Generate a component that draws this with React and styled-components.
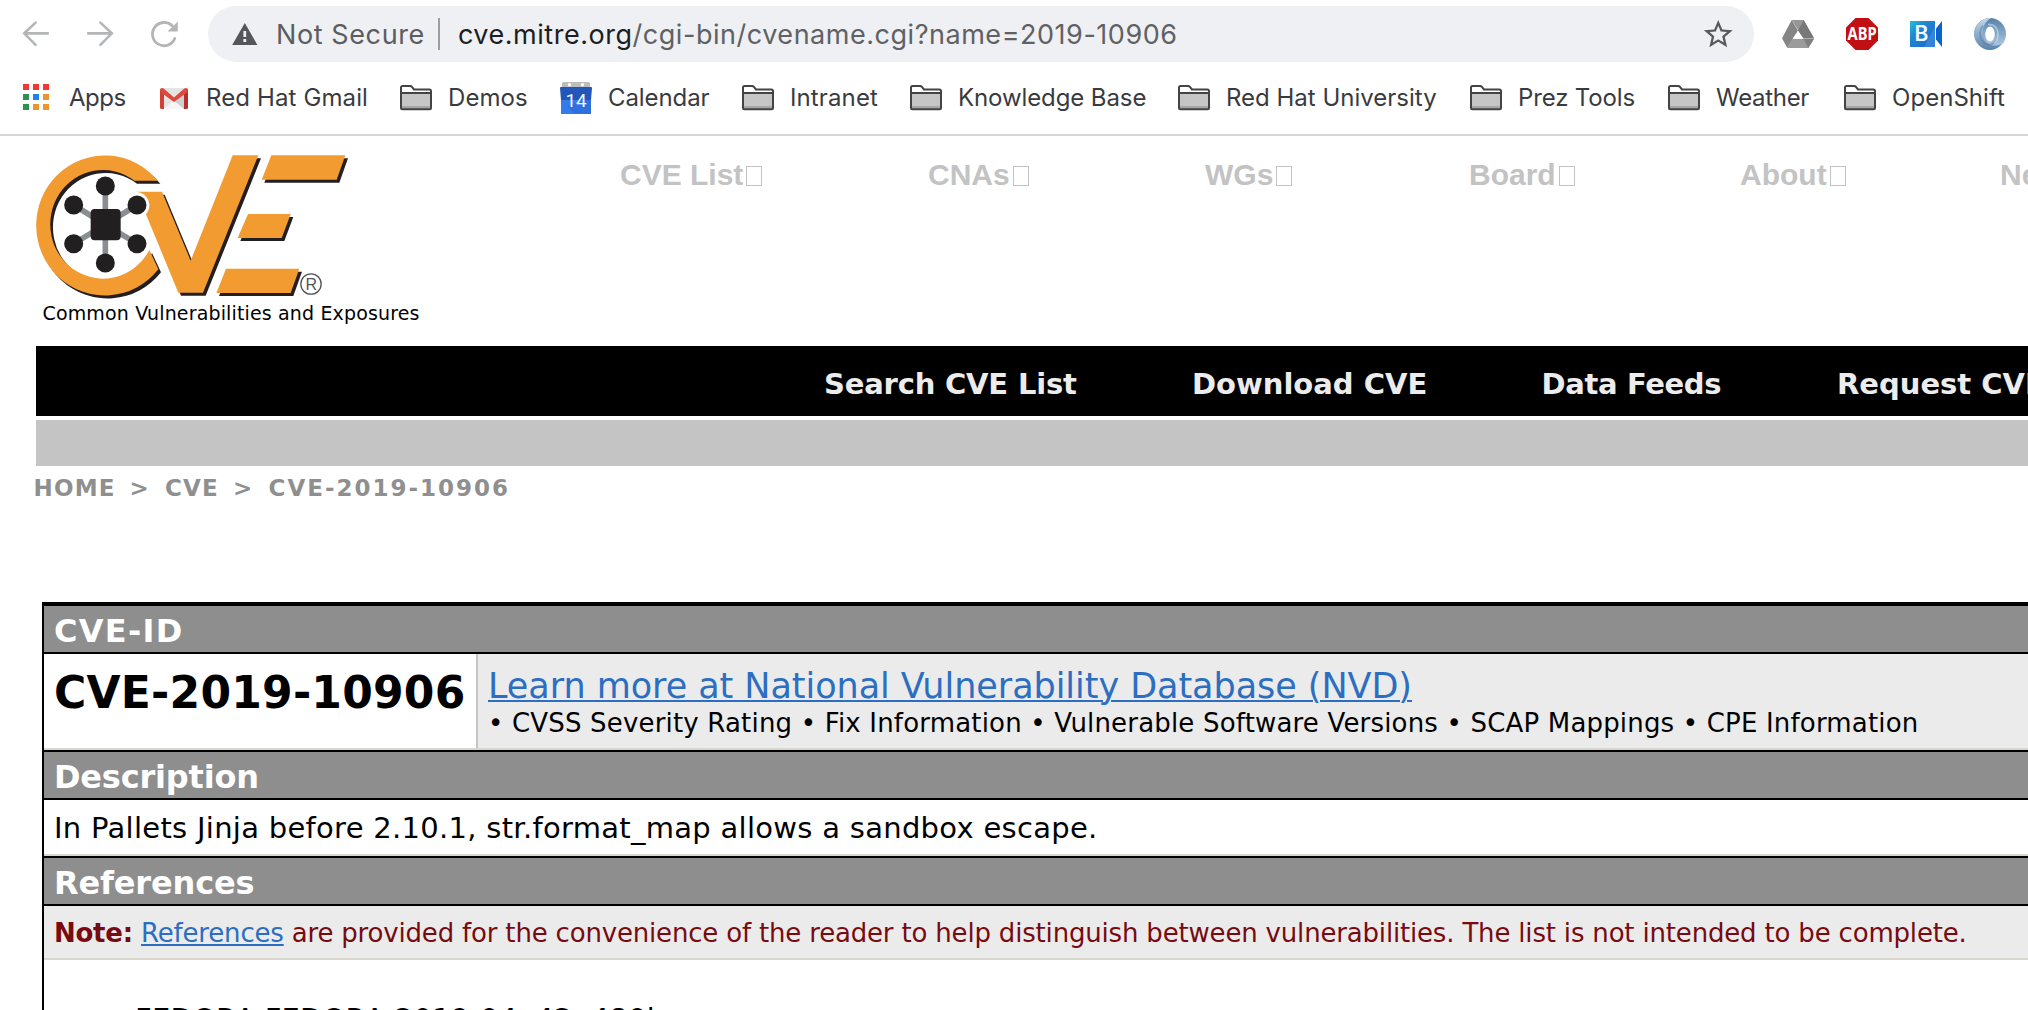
import React from "react";
import styled, { createGlobalStyle } from "styled-components";

const VERDANA = `"DejaVu Sans", Verdana, sans-serif`;
const SYSTEM = `Inter, Roboto, sans-serif`;
const ARIAL = `"Liberation Sans", Arial, sans-serif`;

const GlobalStyle = createGlobalStyle`
  *, *::before, *::after { box-sizing: border-box; }
  html, body { margin: 0; padding: 0; background: #fff; overflow: hidden; }
`;

const Window = styled.div`
  width: 2028px;
  height: 1010px;
  overflow: hidden;
  background: #fff;
  display: flex;
  flex-direction: column;
`;

/* ---------- browser chrome ---------- */

const Chrome = styled.header`
  flex: none;
  height: 136px;
  border-bottom: 2px solid #d5d6da;
  font-family: ${SYSTEM};
`;

const Toolbar = styled.div`
  display: flex;
  align-items: center;
  height: 68px;
  padding-left: 20px;
`;

const NavButtons = styled.div`
  display: flex;
  gap: 32px;
`;

const Icon = styled.svg`
  display: block;
  flex: none;
  width: ${(p) => p.$size || 32}px;
  height: ${(p) => p.$size || 32}px;
  overflow: visible;
`;

const Omnibox = styled.div`
  display: flex;
  align-items: center;
  width: 1546px;
  height: 56px;
  margin-left: 28px;
  padding: 0 18.5px 0 24px;
  border-radius: 28px;
  background: #eff0f3;
  font-size: 27px;
  line-height: 32px;
  white-space: pre;
`;

const Security = styled.span`
  margin-left: 18px;
  padding-top: 1px;
  letter-spacing: 0.6px;
  color: #5c5d60;
`;

const Divider = styled.span`
  width: 2px;
  height: 32px;
  margin: 0 18px 0 13px;
  background: #9c9ea2;
`;

const Url = styled.span`
  flex: 1;
  padding-top: 1px;
  letter-spacing: 0.53px;
  color: #5f6164;
  b {
    font-weight: 400;
    color: #1d1e21;
  }
`;

const Extensions = styled.div`
  display: flex;
  gap: 32px;
  margin-left: 28px;
`;

const Bookmarks = styled.div`
  display: flex;
  align-items: center;
  height: 66px;
  padding: 0 0 8px 21px;
`;

const Bookmark = styled.div`
  display: flex;
  flex: none;
  align-items: center;
  gap: 16px;
  width: ${(p) => p.$w}px;
  font-size: 24px;
  line-height: 30px;
  letter-spacing: ${(p) => p.$ls || 0}px;
  color: #393b3f;
  white-space: nowrap;
`;

const BookmarkLabel = styled.span`
  padding-top: 2px;
`;

const BackIcon = () => (
  <Icon viewBox="0 0 32 32" fill="none" stroke="#b4b5b6" strokeWidth="2.6" strokeLinecap="round">
    <path d="M27.8 15.4H4.5M15.6 4.6L4.2 15.4l11.4 11.4" />
  </Icon>
);

const ForwardIcon = () => (
  <Icon viewBox="0 0 32 32" fill="none" stroke="#b4b5b6" strokeWidth="2.6" strokeLinecap="round">
    <path d="M4.2 15.4h23.6M16.4 4.6l11.4 10.8-11.4 11.4" />
  </Icon>
);

const ReloadIcon = () => (
  <Icon viewBox="0 0 32 32">
    <path d="M26.8 20.5A11.6 11.6 0 1 1 24.2 7.8" fill="none" stroke="#b4b5b6" strokeWidth="2.8" strokeLinecap="round" />
    <path d="M29.8 3.4v10H19.6z" fill="#b4b5b6" />
  </Icon>
);

const WarningIcon = () => (
  <Icon $size={26} viewBox="0 0 26 26">
    <path d="M12.8 2L25.4 24H.2z" fill="#545659" />
    <path d="M11.4 10h2.8v6h-2.8zM11.4 18h2.8v3h-2.8z" fill="#eff0f3" />
  </Icon>
);

const StarIcon = () => (
  <Icon $size={34.5} viewBox="0 0 24 24">
    <path
      fill="#58595c"
      d="M22 9.24l-7.19-.62L12 2 9.19 8.63 2 9.24l5.46 4.73L5.82 21 12 17.27 18.18 21l-1.63-7.03L22 9.24zM12 15.4l-3.76 2.27 1-4.28-3.32-2.88 4.38-.38L12 6.1l1.71 4.04 4.38.38-3.32 2.88 1 4.28L12 15.4z"
    />
  </Icon>
);

const DriveIcon = () => (
  <Icon viewBox="0 0 32 32">
    <path d="M9.7 2L16 12.7 5.3 30 0 20.3z" fill="#858585" />
    <path d="M9.7 2h12L32 20.3H21.3z" fill="#979797" />
    <path d="M21.7 2L32 20.3H21.3L16 12.7z" fill="#787878" />
    <path d="M10.7 20.7H32L26.3 30h-21z" fill="#9b9b9b" />
    <path d="M21.3 20.7H32L26.3 30z" fill="#7f7f7f" />
    <path d="M16 12.7l5.3 8H10.7z" fill="#fff" />
  </Icon>
);

const AdblockIcon = () => (
  <Icon viewBox="0 0 32 32">
    <path d="M9.5 0h13L32 9.5v13L22.5 32h-13L0 22.5v-13z" fill="#c10f14" />
    <text x="1.6" y="22.4" textLength="29" lengthAdjust="spacingAndGlyphs" fontFamily="Noto Sans, sans-serif" fontWeight="700" fontSize="17" fill="#fff">
      ABP
    </text>
  </Icon>
);

const BlueJeansIcon = () => (
  <Icon viewBox="0 0 32 32">
    <defs>
      <linearGradient id="bj" x1="0" y1="0" x2="1" y2="1">
        <stop offset="0" stopColor="#25bfd8" />
        <stop offset=".35" stopColor="#2086d4" />
        <stop offset="1" stopColor="#1767c8" />
      </linearGradient>
    </defs>
    <path d="M0 3h25v26H0z" fill="url(#bj)" />
    <path d="M25 8.5V29H14z" fill="#3f8fe0" opacity=".7" />
    <path d="M32 3v26l-6-7.5v-11z" fill="#0b63cb" />
    <text x="4.6" y="23.3" fontFamily="Inter, sans-serif" fontWeight="600" fontSize="21" fill="#f2f8fd">
      B
    </text>
  </Icon>
);

const SwirlIcon = () => (
  <Icon viewBox="0 0 32 32">
    <defs>
      <linearGradient id="swA" x1="0" y1="0" x2="0" y2="1">
        <stop offset="0" stopColor="#5580a8" />
        <stop offset="1" stopColor="#b9d3ea" />
      </linearGradient>
      <linearGradient id="swB" x1="0" y1="0" x2="0" y2="1">
        <stop offset="0" stopColor="#c3d8ea" />
        <stop offset="1" stopColor="#5a84ab" />
      </linearGradient>
    </defs>
    <circle cx="16" cy="16" r="16" fill="url(#swA)" />
    <path d="M17 0A16 16 0 0 0 16 32c5 0 9-2.500 11-6-7 3.500-15 1-17.500-6C7 12 10 4 17 0z" fill="url(#swB)" />
    <path d="M9 7.500C4.500 13 5.500 22 11 25.500c4 2.400 9 1 11.500-3" fill="none" stroke="#557fa9" strokeWidth="1.800" opacity=".55" />
    <path d="M14 6.500c6-1 10 4 10 10 0 4-1.500 7-4 9" fill="none" stroke="#d2e2f0" strokeWidth="1.600" opacity=".6" />
    <ellipse cx="16" cy="16" rx="4.800" ry="7.600" fill="#fff" />
  </Icon>
);

const APP_COLORS = ["#f23535", "#f23535", "#f23535", "#2f9150", "#1b83ea", "#ea962c", "#2f9150", "#ea962c", "#ea962c"];

const AppsIcon = () => (
  <Icon viewBox="0 0 32 32">
    {APP_COLORS.map((c, i) => (
      <rect key={i} x={2 + (i % 3) * 10} y={3 + Math.floor(i / 3) * 10} width="6" height="6" fill={c} />
    ))}
  </Icon>
);

const GmailIcon = () => (
  <Icon viewBox="0 0 32 32">
    <rect x="2" y="7" width="28" height="21" rx="1.500" fill="#e4e4e4" />
    <path d="M6 28l10-9 10 9z" fill="#f5f5f5" />
    <path d="M16 19.500l10-9V28z" fill="#cfcfcf" />
    <path d="M2 8.500h4V28H3.500A1.500 1.500 0 0 1 2 26.500z" fill="#d23f35" />
    <path d="M26 8.500h4v18a1.500 1.500 0 0 1-1.500 1.500H26z" fill="#b52f2c" />
    <path d="M2 9c0-2 2.300-2.700 3.700-1.500L16 16.500 26.300 7.500C27.700 6.300 30 7 30 9l-1 2.500-13 9.500L3 11.500z" fill="#dc4a3e" />
  </Icon>
);

const FolderIcon = () => (
  <Icon viewBox="0 0 32 32">
    <path d="M1 27V6.500A1.500 1.500 0 0 1 2.500 5h7.600c.8 0 1.300.3 1.800.9L14 8.500h15.500A1.500 1.500 0 0 1 31 10v17a1.300 1.300 0 0 1-1.300 1.300H2.300A1.300 1.300 0 0 1 1 27z" fill="#fff" />
    <path d="M1 12h30v15.500H1z" fill="#c6c6c6" />
    <path d="M1 25h30v3H1z" fill="#a6a6a6" />
    <path
      d="M1 27V6.500A1.500 1.500 0 0 1 2.500 5h7.600c.8 0 1.300.3 1.800.9L14 8.500h15.500A1.500 1.500 0 0 1 31 10v17a1.300 1.300 0 0 1-1.300 1.300H2.300A1.300 1.300 0 0 1 1 27zM1 12h30"
      fill="none"
      stroke="#434244"
      strokeWidth="2"
    />
  </Icon>
);

const CalendarIcon = () => (
  <Icon viewBox="0 0 32 32">
    <path d="M2 7V2.500Q2 1 3.500 1h25Q30 1 30 2.500V7z" fill="#bcbcbc" />
    <circle cx="9.500" cy="3.700" r="1.700" fill="#fff" />
    <circle cx="22.500" cy="3.700" r="1.700" fill="#fff" />
    <path d="M1 6h30q1 0 1 1l-1 12v13q0 1-1 1H2q-1 0-1-1V19L0 7q0-1 1-1z" fill="#2356ba" />
    <path d="M1 19h30v13q0 1-1 1H2q-1 0-1-1z" fill="#367bee" />
    <path d="M7 25l8 8h15q1 0 1-1V19h-6z" fill="#2c69d6" opacity=".6" />
    <text x="16" y="25.700" textAnchor="middle" fontFamily="Roboto, sans-serif" fontSize="19" letterSpacing="-.3" fill="#f1f5fd">
      14
    </text>
  </Icon>
);

const BOOKMARKS = [
  { label: "Apps", icon: AppsIcon, w: 137, ls: -0.5 },
  { label: "Red Hat Gmail", icon: GmailIcon, w: 242, ls: 0.12 },
  { label: "Demos", icon: FolderIcon, w: 160, ls: 0.07 },
  { label: "Calendar", icon: CalendarIcon, w: 182, ls: -0.08 },
  { label: "Intranet", icon: FolderIcon, w: 168, ls: 0.12 },
  { label: "Knowledge Base", icon: FolderIcon, w: 268, ls: -0.1 },
  { label: "Red Hat University", icon: FolderIcon, w: 292 },
  { label: "Prez Tools", icon: FolderIcon, w: 198, ls: -0.15 },
  { label: "Weather", icon: FolderIcon, w: 176, ls: -0.3 },
  { label: "OpenShift", icon: FolderIcon, w: 184, ls: 0.04 },
];

/* ---------- site header ---------- */

const Page = styled.main`
  flex: 1;
  min-height: 0;
  font-family: ${VERDANA};
`;

const SiteHeader = styled.div`
  display: flex;
  height: 210px;
  padding: 18px 0 0 36px;
`;

const Brand = styled.div`
  flex: none;
  width: 584px;
`;

const LogoSvg = styled.svg`
  display: block;
  width: 312px;
  height: 146px;
  overflow: visible;
`;

const Tagline = styled.div`
  margin: 1px 0 0 6.5px;
  font-size: 19px;
  line-height: 24px;
  letter-spacing: 0.15px;
  color: #000;
  white-space: nowrap;
`;

const TopNav = styled.nav`
  display: flex;
  flex: 1;
  min-width: 0;
  padding-top: 4px;
  overflow: hidden;
`;

const TopLink = styled.a`
  display: flex;
  flex: none;
  gap: 3px;
  width: ${(p) => p.$w}px;
  height: 34px;
  font: bold 30px/34px ${ARIAL};
  color: #c3c3c3;
`;

const MissingGlyph = styled.i`
  width: 16px;
  height: 20px;
  margin-top: 8px;
  border: 1px solid #c3c3c3;
`;

const TOP_LINKS = [
  { label: "CVE List", w: 308 },
  { label: "CNAs", w: 277 },
  { label: "WGs", w: 264 },
  { label: "Board", w: 271 },
  { label: "About", w: 260 },
  { label: "News", w: 200 },
];

const BlackBar = styled.nav`
  display: flex;
  height: 70px;
  margin-left: 36px;
  padding: 6px 0 0 788px;
  overflow: hidden;
  background: #000;
`;

const BarLink = styled.a`
  flex: none;
  width: ${(p) => p.$w}px;
  font-size: 29px;
  font-weight: bold;
  line-height: 64px;
  letter-spacing: ${(p) => p.$ls || 0}px;
  color: #ececec;
  white-space: nowrap;
`;

const GrayBar = styled.div`
  height: 46px;
  margin: 4px 0 0 36px;
  background: #c4c4c4;
`;

const Breadcrumb = styled.div`
  display: flex;
  height: 136px;
  padding: 7px 0 0 33.5px;
`;

const Crumb = styled.span`
  width: ${(p) => p.$w}px;
  font-size: 23px;
  font-weight: bold;
  line-height: 30px;
  letter-spacing: ${(p) => p.$ls || 0}px;
  color: #8f8f8f;
  white-space: nowrap;
`;

/* ---------- CVE record ---------- */

const Record = styled.section`
  height: 520px;
  margin-left: 42px;
  border-left: 2px solid #000;
  border-top: 4px solid #000;
`;

const SectionHead = styled.h2`
  height: ${(p) => (p.$first ? 48 : 50)}px;
  margin: 0;
  padding-left: 10px;
  border-top: ${(p) => (p.$first ? 0 : 2)}px solid #000;
  border-bottom: 2px solid #000;
  background: #8e8e8e;
  font-size: 32px;
  line-height: 50px;
  letter-spacing: ${(p) => p.$ls || 0}px;
  color: #fff;
`;

const Row = styled.div`
  display: flex;
  height: ${(p) => p.$h}px;
  padding-left: ${(p) => (p.$flush ? 0 : 10)}px;
  border-bottom: 2px solid #d9d6cc;
  background: ${(p) => (p.$shaded ? "#ebebeb" : "#fff")};
  white-space: nowrap;
`;

const IdCell = styled.div`
  flex: none;
  width: 434px;
  padding: 13px 0 0 10px;
  border-right: 2px solid #c6c6c6;
  font-size: 44px;
  font-weight: bold;
  line-height: 52px;
  letter-spacing: 0.22px;
  color: #000;
`;

const NvdCell = styled.div`
  flex: 1;
  padding: 11px 0 0 10px;
  background: #ebebeb;
`;

const Link = styled.a`
  color: #2c6ec2;
  text-decoration: underline;
  text-decoration-thickness: 2px;
  text-underline-offset: 2px;
`;

const NvdTitle = styled.div`
  font-size: 35px;
  line-height: 42px;
  letter-spacing: -0.05px;
`;

const NvdList = styled.div`
  font-size: 26px;
  line-height: 32px;
  letter-spacing: 0.18px;
  color: #000;
`;

const Description = styled.p`
  margin: 0;
  font-size: 29px;
  line-height: 56px;
  letter-spacing: 0.29px;
  color: #000;
`;

const Note = styled.div`
  display: flex;
  font-size: 26px;
  line-height: 54px;
  letter-spacing: -0.18px;
  color: #780b10;
  b {
    width: 87px;
    letter-spacing: -0.25px;
  }
`;

const NoteText = styled.span`
  margin-left: 8px;
`;

const RefList = styled.ul`
  margin: 0;
  padding: 42px 0 0 91px;
  list-style: none;
  font-size: 29px;
  line-height: 34px;
  letter-spacing: 0.2px;
  color: #000;
`;

const LogoShapes = ({ c }) => (
  <g fill={c}>
    <path d="M413 122A206 210 0 1 0 415 388L388 330A158 163 0 1 1 343 122z" />
    <path d="M350 155H426L512 362 638 46H715L549 458H475z" />
    <path d="M754 46H976L950 119H725z" />
    <path d="M684 222H812L785 294H653z" />
    <path d="M618 386H838L812 459H589z" />
  </g>
);

const NODES = [
  [256, 138],
  [161, 195],
  [351, 195],
  [161, 311],
  [351, 311],
  [256, 369],
];

const Logo = () => (
  <LogoSvg viewBox="48 42 936 438" role="img" aria-label="CVE">
    <g transform="translate(8 9)">
      <LogoShapes c="#231f20" />
    </g>
    <LogoShapes c="#f29b30" />
    <circle cx="348" cy="196" r="40" fill="#fff" />
    {NODES.map(([x, y]) => (
      <path key={`s${x}-${y}`} d={`M256 254L${x} ${y}`} stroke="#8a8d92" strokeWidth="17" />
    ))}
    {NODES.map(([x, y]) => (
      <circle key={`n${x}-${y}`} cx={x} cy={y} r="28.500" fill="#211f1f" />
    ))}
    <rect x="212" y="207" width="90" height="94" rx="12" fill="#211f1f" />
    <circle cx="873" cy="432" r="30.500" fill="none" stroke="#555" strokeWidth="4" />
    <text x="874" y="449" textAnchor="middle" fontFamily="Liberation Sans, sans-serif" fontSize="48" fill="#555">
      R
    </text>
  </LogoSvg>
);

export default function App() {
  return (
    <Window>
      <GlobalStyle />
      <Chrome>
        <Toolbar>
          <NavButtons>
            <BackIcon />
            <ForwardIcon />
            <ReloadIcon />
          </NavButtons>
          <Omnibox>
            <WarningIcon />
            <Security>Not Secure</Security>
            <Divider />
            <Url>
              <b>cve.mitre.org</b>/cgi-bin/cvename.cgi?name=2019-10906
            </Url>
            <StarIcon />
          </Omnibox>
          <Extensions>
            <DriveIcon />
            <AdblockIcon />
            <BlueJeansIcon />
            <SwirlIcon />
          </Extensions>
        </Toolbar>
        <Bookmarks>
          {BOOKMARKS.map(({ label, icon: Glyph, w, ls }) => (
            <Bookmark key={label} $w={w} $ls={ls}>
              <Glyph />
              <BookmarkLabel>{label}</BookmarkLabel>
            </Bookmark>
          ))}
        </Bookmarks>
      </Chrome>
      <Page>
        <SiteHeader>
          <Brand>
            <Logo />
            <Tagline>Common Vulnerabilities and Exposures</Tagline>
          </Brand>
          <TopNav>
            {TOP_LINKS.map(({ label, w }) => (
              <TopLink key={label} $w={w}>
                {label}
                <MissingGlyph />
              </TopLink>
            ))}
          </TopNav>
        </SiteHeader>
        <BlackBar>
          <BarLink $w={368} $ls={-0.19}>Search CVE List</BarLink>
          <BarLink $w={349.5}>Download CVE</BarLink>
          <BarLink $w={295.5} $ls={-0.35}>Data Feeds</BarLink>
          <BarLink $w={260}>Request CVE IDs</BarLink>
        </BlackBar>
        <GrayBar />
        <Breadcrumb>
          <Crumb $w={96} $ls={1.2}>HOME</Crumb>
          <Crumb $w={35.5}>&gt;</Crumb>
          <Crumb $w={68} $ls={1.16}>CVE</Crumb>
          <Crumb $w={35.5}>&gt;</Crumb>
          <Crumb $w={260} $ls={2}>CVE-2019-10906</Crumb>
        </Breadcrumb>
        <Record>
          <SectionHead $first $ls={1.3}>CVE-ID</SectionHead>
          <Row $h={96} $flush>
            <IdCell>CVE-2019-10906</IdCell>
            <NvdCell>
              <NvdTitle>
                <Link>Learn more at National Vulnerability Database (NVD)</Link>
              </NvdTitle>
              <NvdList>
                • CVSS Severity Rating • Fix Information • Vulnerable Software Versions • SCAP Mappings • CPE Information
              </NvdList>
            </NvdCell>
          </Row>
          <SectionHead $ls={-0.2}>Description</SectionHead>
          <Row $h={56}>
            <Description>In Pallets Jinja before 2.10.1, str.format_map allows a sandbox escape.</Description>
          </Row>
          <SectionHead $ls={-0.15}>References</SectionHead>
          <Row $h={54} $shaded>
            <Note>
              <b>Note:</b>
              <Link>References</Link>
              <NoteText>
                are provided for the convenience of the reader to help distinguish between vulnerabilities. The list is not
                intended to be complete.
              </NoteText>
            </Note>
          </Row>
          <RefList>
            <li>FEDORA:FEDORA-2019-04a42e480b</li>
          </RefList>
        </Record>
      </Page>
    </Window>
  );
}
